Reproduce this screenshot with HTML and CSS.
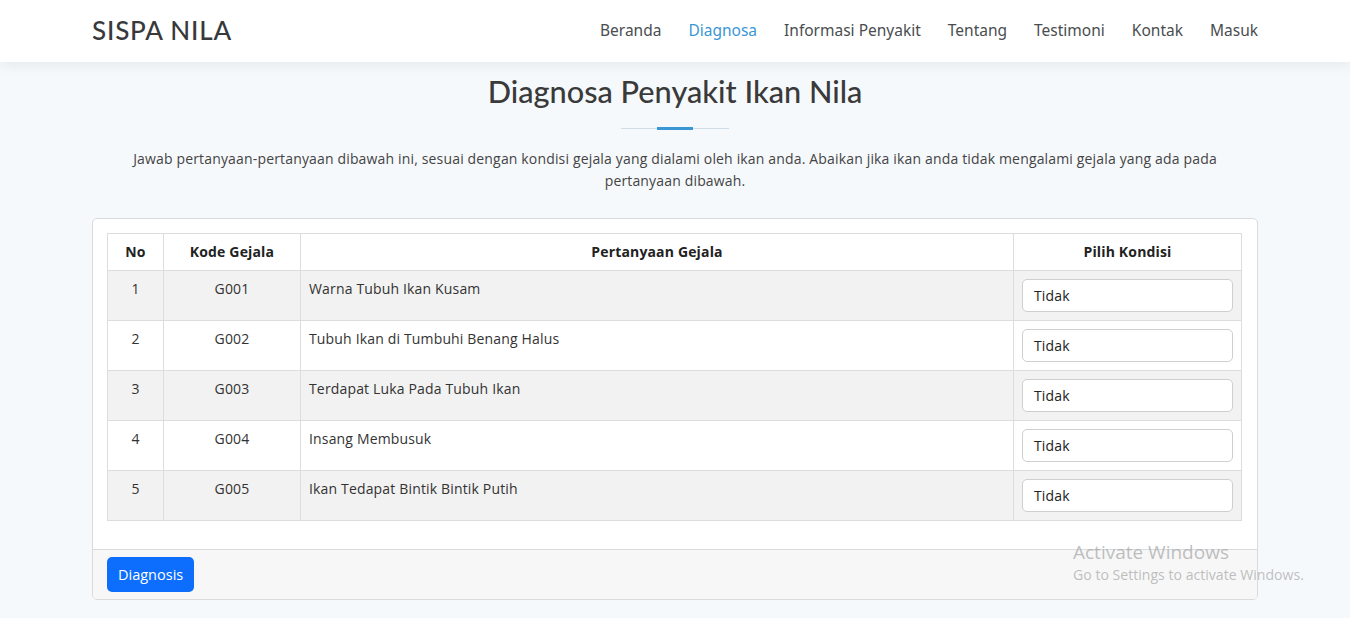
FILE: index.html
```html
<!DOCTYPE html>
<html lang="id">
<head>
<meta charset="utf-8">
<title>SISPA NILA - Diagnosa</title>
<link rel="stylesheet" href="styles.css">
</head>
<body>
<header class="navbar">
  <div class="wrap nav-inner">
    <div class="logo">SISPA NILA</div>
    <nav class="menu">
      <a href="#">Beranda</a>
      <a href="#" class="active">Diagnosa</a>
      <a href="#">Informasi Penyakit</a>
      <a href="#">Tentang</a>
      <a href="#">Testimoni</a>
      <a href="#">Kontak</a>
      <a href="#">Masuk</a>
    </nav>
  </div>
</header>
<main class="wrap">
  <div class="section-title">
    <h2>Diagnosa Penyakit Ikan Nila</h2>
    <div class="divider"><span></span></div>
    <p>Jawab pertanyaan-pertanyaan dibawah ini, sesuai dengan kondisi gejala yang dialami oleh ikan anda. Abaikan jika ikan anda tidak mengalami gejala yang ada pada pertanyaan dibawah.</p>
  </div>
  <div class="card">
    <div class="card-body">
      <table class="tbl">
        <thead>
          <tr><th class="c-no">No</th><th class="c-kode">Kode Gejala</th><th>Pertanyaan Gejala</th><th class="c-pilih">Pilih Kondisi</th></tr>
        </thead>
        <tbody>
          <tr><td class="ctr">1</td><td class="ctr">G001</td><td>Warna Tubuh Ikan Kusam</td><td><div class="select">Tidak</div></td></tr>
          <tr><td class="ctr">2</td><td class="ctr">G002</td><td>Tubuh Ikan di Tumbuhi Benang Halus</td><td><div class="select">Tidak</div></td></tr>
          <tr><td class="ctr">3</td><td class="ctr">G003</td><td>Terdapat Luka Pada Tubuh Ikan</td><td><div class="select">Tidak</div></td></tr>
          <tr><td class="ctr">4</td><td class="ctr">G004</td><td>Insang Membusuk</td><td><div class="select">Tidak</div></td></tr>
          <tr><td class="ctr">5</td><td class="ctr">G005</td><td>Ikan Tedapat Bintik Bintik Putih</td><td><div class="select">Tidak</div></td></tr>
        </tbody>
      </table>
    </div>
    <div class="card-footer">
      <button class="btn">Diagnosis</button>
    </div>
  </div>
</main>
<div class="watermark">
  <div class="wm-1">Activate Windows</div>
  <div class="wm-2">Go to Settings to activate Windows.</div>
</div>
</body>
</html>
```
FILE: styles.css
```css
* { box-sizing: border-box; }
html, body { margin: 0; padding: 0; }
body {
  background: #f6f9fc;
  font-family: "Open Sans", "Noto Sans", sans-serif;
  font-size: 14px;
  letter-spacing: 0.16px;
  color: #444444;
  height: 618px;
  overflow: hidden;
}
.wrap {
  width: 1166px;
  margin: 0 auto;
}
.navbar {
  background: #ffffff;
  height: 62px;
  box-shadow: 0 2px 15px rgba(0, 0, 0, 0.08);
  position: relative;
  z-index: 2;
}
.nav-inner {
  height: 62px;
  display: flex;
  align-items: center;
  justify-content: space-between;
}
.logo {
  font-family: "Lato", "Noto Sans", sans-serif;
  font-size: 26px;
  font-weight: 500;
  letter-spacing: 0.8px;
  color: #37393b;
  margin-top: -2px;
}
.menu {
  display: flex;
  gap: 27px;
  margin-top: -2px;
}
.menu a {
  font-family: "Noto Sans", sans-serif;
  font-size: 15.5px;
  letter-spacing: 0;
  color: #4a4d50;
  text-decoration: none;
}
.menu a.active { color: #3a97d4; }
.section-title {
  text-align: center;
  padding-top: 12px;
}
.section-title h2 {
  font-family: "Lato", "Noto Sans", sans-serif;
  font-size: 30.7px;
  font-weight: 500;
  letter-spacing: 0;
  color: #3a3a3a;
  margin: 0;
  line-height: 36px;
}
.divider {
  width: 108px;
  height: 1px;
  background: #cfdde8;
  margin: 18px auto 0;
  position: relative;
}
.divider span {
  position: absolute;
  left: 36px;
  top: -1px;
  width: 36px;
  height: 3px;
  background: #3a97d4;
}
.section-title p {
  margin: 19px 30px 0;
  line-height: 22px;
  color: #444444;
}
.card {
  margin-top: 26px;
  background: #ffffff;
  border: 1px solid #d9dcdf;
  border-radius: 5px;
  overflow: hidden;
}
.card-body { padding: 14px 15px 28px 14px; }
.tbl {
  width: 100%;
  border-collapse: collapse;
  color: #333333;
}
.tbl th, .tbl td {
  border: 1px solid #dddddd;
  padding: 8px;
  vertical-align: top;
  text-align: left;
  line-height: 20px;
}
.tbl th {
  text-align: center;
  font-weight: 700;
  color: #222222;
}
.tbl td { height: 50px; }
.tbl .ctr { text-align: center; }
.c-no { width: 56px; }
.c-kode { width: 137px; }
.c-pilih { width: 228px; }
.tbl tbody tr:nth-child(odd) td { background: #f2f2f2; }
.select {
  height: 33px;
  border: 1px solid #cfcfcf;
  border-radius: 5px;
  background: #ffffff;
  padding: 6px 11px;
  color: #222222;
  line-height: 20px;
}
.card-footer {
  background: #f7f7f7;
  border-top: 1px solid #d9dcdf;
  padding: 7px 14px 7px;
}
.btn {
  font-family: "Open Sans", "Noto Sans", sans-serif;
  font-size: 14.5px;
  color: #ffffff;
  background: #0d6efd;
  border: none;
  border-radius: 5px;
  height: 35px;
  padding: 0 11px;
}
.watermark {
  position: absolute;
  left: 1073px;
  top: 540px;
  color: rgba(150, 150, 150, 0.6);
  font-family: "Open Sans", "Noto Sans", sans-serif;
  letter-spacing: 0;
}
.wm-1 { font-size: 19px; line-height: 24px; }
.wm-2 { font-size: 14.1px; line-height: 22px; }
```
